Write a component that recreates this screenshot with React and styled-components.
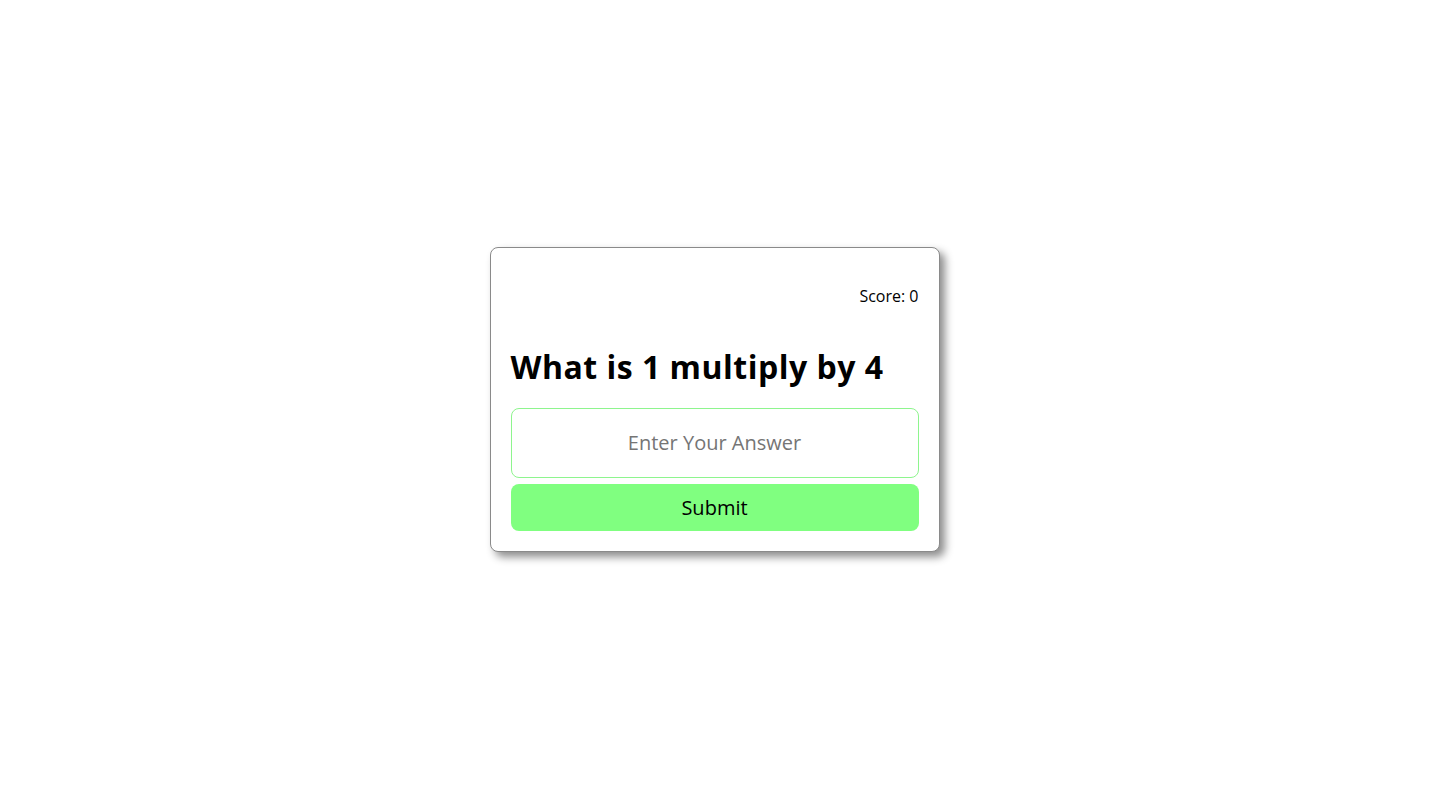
import React, { useState } from "react";
import styled, { createGlobalStyle } from "styled-components";

const GlobalStyle = createGlobalStyle`
  html, body {
    margin: 0;
    padding: 0;
    background: #fff;
  }
  body {
    font-family: "Comic Sans MS", "Open Sans", "Liberation Sans", sans-serif;
  }
`;

const Page = styled.div`
  min-height: 798px;
  display: flex;
  align-items: center;
  justify-content: center;
  padding-right: 6px;
  box-sizing: border-box;
`;

const Card = styled.div`
  width: 450px;
  box-sizing: border-box;
  padding: 20px;
  border: 1px solid #8a8a8a;
  border-radius: 8px;
  background: #fff;
  box-shadow: 5px 5px 8px rgba(0, 0, 0, 0.45);
  display: flex;
  flex-direction: column;
`;

const Score = styled.div`
  margin-top: 19px;
  text-align: right;
  font-size: 16px;
  line-height: 19px;
  color: #000;
`;

const Question = styled.h1`
  margin: 41px 0 21px;
  font-size: 32px;
  line-height: 40px;
  font-weight: 700;
  letter-spacing: 0.5px;
  color: #000;
`;

const AnswerInput = styled.input`
  height: 70px;
  box-sizing: border-box;
  border: 1px solid #8ef58e;
  border-radius: 8px;
  outline: none;
  text-align: center;
  font-family: inherit;
  font-size: 20px;
  color: #000;

  &::placeholder {
    color: #757575;
  }
`;

const SubmitButton = styled.button`
  margin-top: 6px;
  height: 47px;
  border: none;
  border-radius: 8px;
  background: #80ff80;
  font-family: inherit;
  font-size: 20px;
  color: #000;
  cursor: pointer;
`;

export default function App() {
  const [a] = useState(1);
  const [b] = useState(4);
  const [score] = useState(0);
  const [answer, setAnswer] = useState("");

  return (
    <>
      <GlobalStyle />
      <Page>
        <Card>
          <Score>Score: {score}</Score>
          <Question>
            What is {a} multiply by {b}
          </Question>
          <AnswerInput
            value={answer}
            onChange={(e) => setAnswer(e.target.value)}
            placeholder="Enter Your Answer"
          />
          <SubmitButton type="button">Submit</SubmitButton>
        </Card>
      </Page>
    </>
  );
}
